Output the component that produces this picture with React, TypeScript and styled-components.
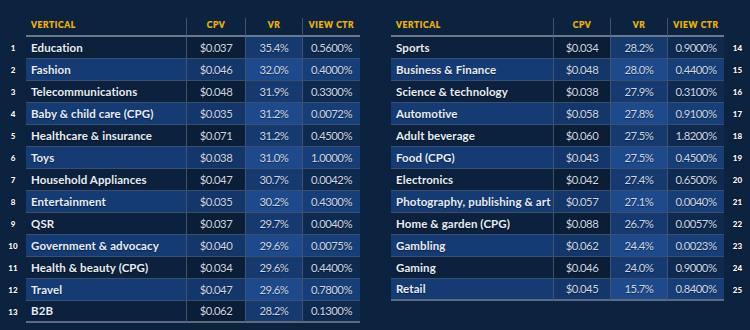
import React from "react";
import styled, { createGlobalStyle } from "styled-components";

const GlobalStyle = createGlobalStyle`
    html, body {
        margin: 0;
        padding: 0;
        background: #0c2340;
    }
    body {
        font-family: Lato, "Open Sans", sans-serif;
    }
`

type Row = { n: number; name: string; cpv: string; vr: string; ctr: string }

const leftRows: Row[] = [
    { n: 1, name: "Education", cpv: "$0.037", vr: "35.4%", ctr: "0.5600%" },
    { n: 2, name: "Fashion", cpv: "$0.046", vr: "32.0%", ctr: "0.4000%" },
    { n: 3, name: "Telecommunications", cpv: "$0.048", vr: "31.9%", ctr: "0.3300%" },
    { n: 4, name: "Baby & child care (CPG)", cpv: "$0.035", vr: "31.2%", ctr: "0.0072%" },
    { n: 5, name: "Healthcare & insurance", cpv: "$0.071", vr: "31.2%", ctr: "0.4500%" },
    { n: 6, name: "Toys", cpv: "$0.038", vr: "31.0%", ctr: "1.0000%" },
    { n: 7, name: "Household Appliances", cpv: "$0.047", vr: "30.7%", ctr: "0.0042%" },
    { n: 8, name: "Entertainment", cpv: "$0.035", vr: "30.2%", ctr: "0.4300%" },
    { n: 9, name: "QSR", cpv: "$0.037", vr: "29.7%", ctr: "0.0040%" },
    { n: 10, name: "Government & advocacy", cpv: "$0.040", vr: "29.6%", ctr: "0.0075%" },
    { n: 11, name: "Health & beauty (CPG)", cpv: "$0.034", vr: "29.6%", ctr: "0.4400%" },
    { n: 12, name: "Travel", cpv: "$0.047", vr: "29.6%", ctr: "0.7800%" },
    { n: 13, name: "B2B", cpv: "$0.062", vr: "28.2%", ctr: "0.1300%" },
]

const rightRows: Row[] = [
    { n: 14, name: "Sports", cpv: "$0.034", vr: "28.2%", ctr: "0.9000%" },
    { n: 15, name: "Business & Finance", cpv: "$0.048", vr: "28.0%", ctr: "0.4400%" },
    { n: 16, name: "Science & technology", cpv: "$0.038", vr: "27.9%", ctr: "0.3100%" },
    { n: 17, name: "Automotive", cpv: "$0.058", vr: "27.8%", ctr: "0.9100%" },
    { n: 18, name: "Adult beverage", cpv: "$0.060", vr: "27.5%", ctr: "1.8200%" },
    { n: 19, name: "Food (CPG)", cpv: "$0.043", vr: "27.5%", ctr: "0.4500%" },
    { n: 20, name: "Electronics", cpv: "$0.042", vr: "27.4%", ctr: "0.6500%" },
    { n: 21, name: "Photography, publishing & art", cpv: "$0.057", vr: "27.1%", ctr: "0.0040%" },
    { n: 22, name: "Home & garden (CPG)", cpv: "$0.088", vr: "26.7%", ctr: "0.0057%" },
    { n: 23, name: "Gambling", cpv: "$0.062", vr: "24.4%", ctr: "0.0023%" },
    { n: 24, name: "Gaming", cpv: "$0.046", vr: "24.0%", ctr: "0.9000%" },
    { n: 25, name: "Retail", cpv: "$0.045", vr: "15.7%", ctr: "0.8400%" },
]

type Col = "name" | "cpv" | "vr" | "ctr"

const shades: Record<Col, [string, string]> = {
    name: ["#0b213d", "#143b73"],
    cpv: ["#0a1e37", "#13376b"],
    vr: ["#143a70", "#1c4a8c"],
    ctr: ["#0e2a4f", "#163f79"],
}

const Page = styled.div`
    display: flex;
    gap: 31px;
    width: 750px;
    height: 330px;
    padding-top: 18px;
    box-sizing: border-box;
    overflow: hidden;
`

const Panel = styled.div`
    display: flex;
    flex-direction: column;
`

const Line = styled.div<{ $side: "left" | "right" }>`
    display: grid;
    grid-template-columns: ${(p) =>
        p.$side === "left" ? "26px 160px 59px 57px 58px" : "162px 57px 57px 57px 27px"};
`

const HeadCell = styled.div<{ $first?: boolean; $align?: "left" | "center" }>`
    height: 19px;
    box-sizing: border-box;
    padding: 2px 5px 0 5px;
    border-left: ${(p) => (p.$first ? "none" : "1px solid #3f5272")};
    border-bottom: 2px solid #6b778b;
    color: #f2b705;
    font-size: 8.5px;
    font-weight: 900;
    letter-spacing: 0.6px;
    text-transform: uppercase;
    text-align: ${(p) => p.$align || "center"};
    line-height: 10px;
    -webkit-text-stroke: 0.2px #f2b705;
`

const Blank = styled.div``

const Num = styled.div`
    display: flex;
    align-items: center;
    justify-content: center;
    color: #ffffff;
    font-size: 8px;
    font-weight: 900;
    text-shadow: 0 0 2px #000;
`

const Cell = styled.div<{ $col: Col; $even: boolean; $last: boolean }>`
    height: 22px;
    box-sizing: border-box;
    display: flex;
    align-items: center;
    justify-content: ${(p) => (p.$col === "name" ? "flex-start" : "center")};
    padding: 0 5px 1px 5px;
    background: ${(p) => shades[p.$col][p.$even ? 1 : 0]};
    border-left: ${(p) => (p.$col === "name" ? "none" : "1px solid #3f5272")};
    border-bottom: ${(p) => (p.$last ? "2px solid #5d6b82" : "1px solid #3a4e6e")};
    color: ${(p) => (p.$col === "name" ? "#e8edf4" : "#cfd6e0")};
    font-size: ${(p) => (p.$col === "name" ? "11.5px" : "11.3px")};
    font-weight: ${(p) => (p.$col === "name" ? 700 : 400)};
    letter-spacing: ${(p) => (p.$col === "name" ? "0.1px" : "-0.5px")};
    text-shadow: 0 1px 1px rgba(0, 0, 0, 0.45);
    white-space: nowrap;
`

function Table({ rows, side }: { rows: Row[]; side: "left" | "right" }) {
    return (
        <Panel>
            <Line $side={side}>
                {side === "left" && <Blank />}
                <HeadCell $first $align="left">Vertical</HeadCell>
                <HeadCell>CPV</HeadCell>
                <HeadCell>VR</HeadCell>
                <HeadCell>View CTR</HeadCell>
                {side === "right" && <Blank />}
            </Line>
            {rows.map((r, i) => {
                const even = i % 2 === 1
                const last = i === rows.length - 1
                return (
                    <Line $side={side} key={r.n}>
                        {side === "left" && <Num>{r.n}</Num>}
                        <Cell $col="name" $even={even} $last={last}>{r.name}</Cell>
                        <Cell $col="cpv" $even={even} $last={last}>{r.cpv}</Cell>
                        <Cell $col="vr" $even={even} $last={last}>{r.vr}</Cell>
                        <Cell $col="ctr" $even={even} $last={last}>{r.ctr}</Cell>
                        {side === "right" && <Num>{r.n}</Num>}
                    </Line>
                )
            })}
        </Panel>
    )
}

export default function App() {
    return (
        <>
            <GlobalStyle />
            <Page>
                <Table rows={leftRows} side="left" />
                <Table rows={rightRows} side="right" />
            </Page>
        </>
    )
}
